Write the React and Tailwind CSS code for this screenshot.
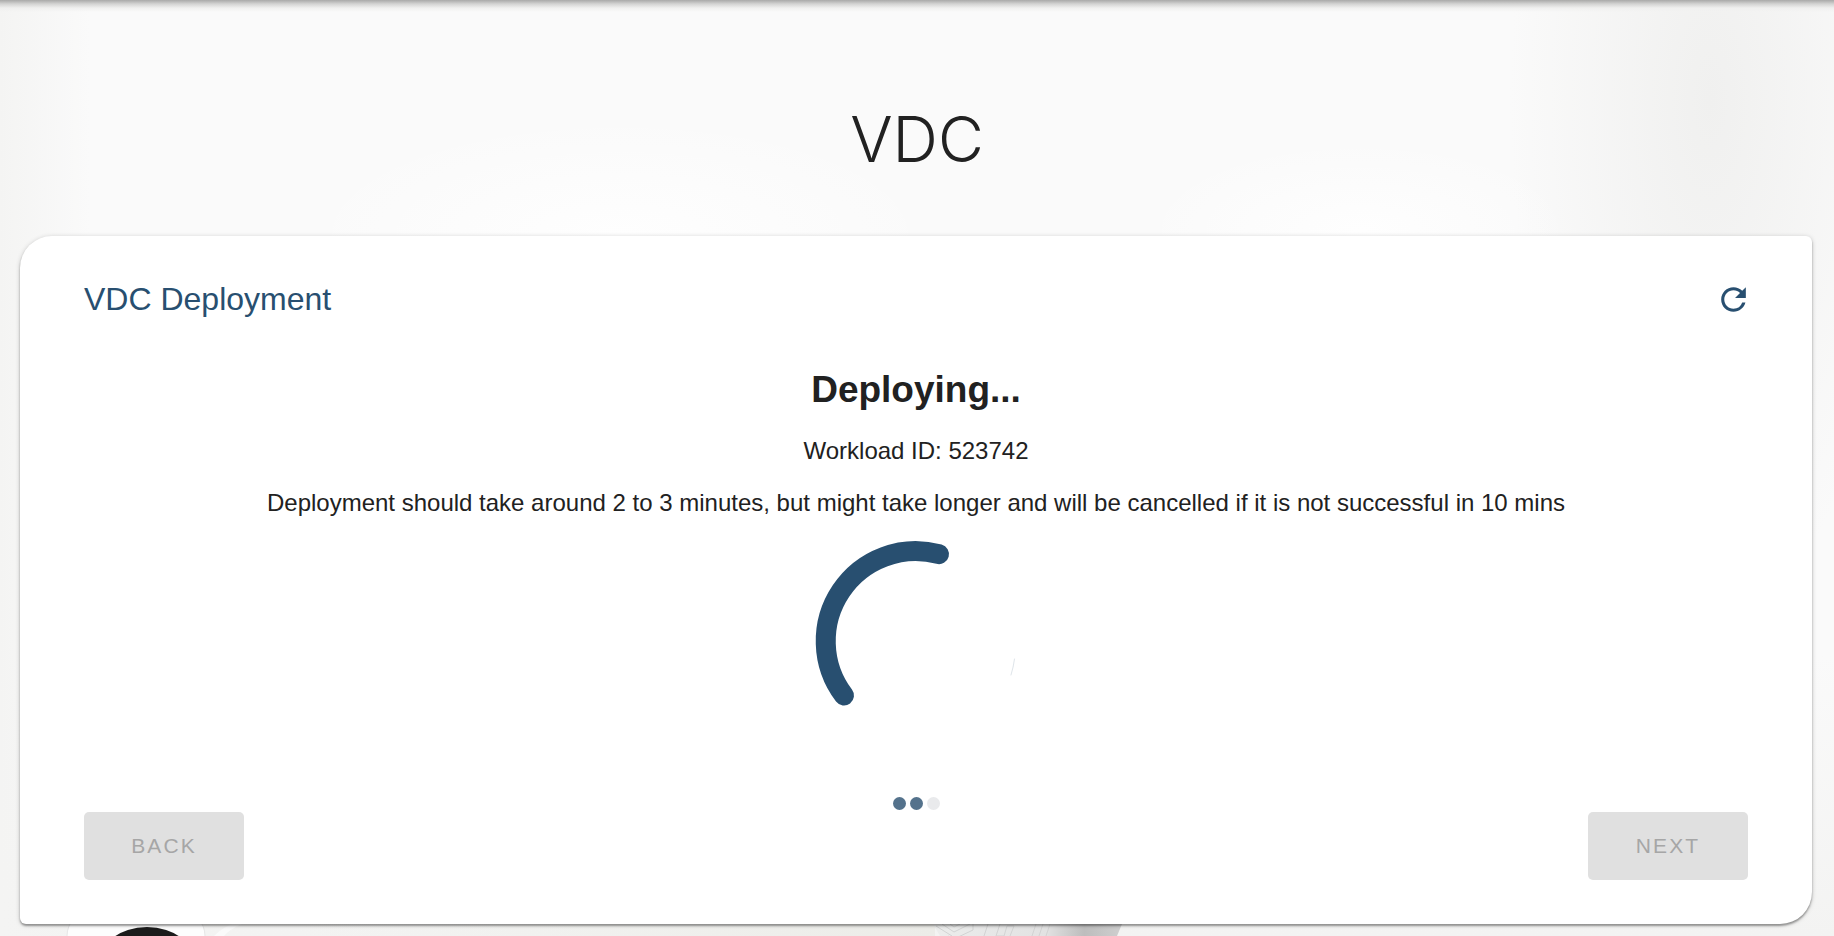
import { MdRefresh } from "react-icons/md";

function Backdrop() {
  return (
    <div
      aria-hidden="true"
      className="absolute inset-0 bg-[#fafafa] bg-[radial-gradient(ellipse_200px_520px_at_1710px_100px,#f0f0ef,transparent),radial-gradient(ellipse_320px_120px_at_620px_236px,#fefefe,transparent),radial-gradient(ellipse_220px_90px_at_1360px_230px,#fefefe,transparent),linear-gradient(to_right,#f4f4f3,transparent_90px),linear-gradient(to_bottom,transparent_70%,#f3f3f2)]"
    />
  );
}

function Spinner() {
  return (
    <svg
      role="img"
      aria-label="Deployment in progress"
      viewBox="-110 -110 220 220"
      className="size-[220px]"
      fill="none"
      strokeLinecap="round"
    >
      <path d="M-72 54.5 A90 90 0 0 1 23 -86.8" stroke="#284f70" strokeWidth="20" />
      <path d="M98.500 18 Q97.500 26 95 34" stroke="#dfe5ea" strokeWidth="1" />
    </svg>
  );
}

function Dots() {
  return (
    <div aria-hidden="true" className="flex justify-center gap-1">
      <span className="size-[13px] rounded-full bg-[#54728c]" />
      <span className="size-[13px] rounded-full bg-[#54728c]" />
      <span className="size-[13px] rounded-full bg-[#e9eaec]" />
    </div>
  );
}

function StepButton({ children }) {
  return (
    <button
      type="button"
      disabled
      className="h-[68px] w-40 rounded-[5px] bg-[#e0e0e0] text-[21px] tracking-widest text-[#a6a6a6] uppercase"
    >
      {children}
    </button>
  );
}

function FooterArt() {
  return (
    <div aria-hidden="true" className="h-3 overflow-hidden">
      <svg width="1834" height="12" viewBox="0 924 1834 12">
        <defs>
          <linearGradient id="slab" x1="0" x2="1">
            <stop offset="0" stopColor="#ecedec" />
            <stop offset="0.6" stopColor="#e2e2e2" />
            <stop offset="0.8" stopColor="#bdbdbd" />
            <stop offset="1" stopColor="#cfcfcf" />
          </linearGradient>
          <linearGradient id="floor" x1="0" x2="1">
            <stop offset="0" stopColor="#eeefeb" stopOpacity="0" />
            <stop offset="1" stopColor="#ecece8" />
          </linearGradient>
        </defs>
        <rect x="67" y="910" width="138" height="60" rx="26" fill="#fdfdfd" stroke="#e6e6e6" />
        <ellipse cx="147" cy="967" rx="50" ry="40" fill="#1b1b1b" />
        <path d="M214 936Q222 928 232 924H242Q230 929 224 936Z" fill="#fafafa" />
        <path d="M300 924H935V936H300Z" fill="url(#floor)" />
        <path d="M933 924H1122L1117 936H940Z" fill="url(#slab)" />
        <path
          d="M936 926L952 936M942 924L954 932L970 924M950 924L954 927L960 924M948 936L954 939L973 930V924M988 924L984 936M1000 924L996 936H1004L1007 926H1014L1010 936M1036 924L1032 936M1043 924L1039 936M1050 924L1046 936"
          fill="none"
          stroke="#d2d3d3"
        />
      </svg>
    </div>
  );
}

function DeploymentCard() {
  return (
    <main className="relative z-10 mr-[22px] ml-5 rounded-[6px] rounded-tl-[32px] rounded-br-[32px] bg-white px-16 pt-[39px] pb-11 shadow-[0_2px_2px_rgba(0,0,0,0.32),0_1px_5px_rgba(0,0,0,0.2)]">
      <header className="flex items-center justify-between">
        <h2 className="text-[32px] leading-[48px] text-[#284f70]">VDC Deployment</h2>
        <button type="button" aria-label="Refresh" className="-mr-1 text-[#284f70]">
          <MdRefresh className="size-[37px]" />
        </button>
      </header>
      <section className="flex flex-col items-center text-center text-2xl leading-8">
        <h3 className="mt-[43px] text-[37px] leading-[48px] font-bold">Deploying...</h3>
        <p className="mt-[21px]">Workload ID: 523742</p>
        <p className="mt-5">
          Deployment should take around 2 to 3 minutes, but might take longer and will be cancelled
          if it is not successful in 10 mins
        </p>
        <div className="mt-3">
          <Spinner />
        </div>
        <div className="mt-[46px]">
          <Dots />
        </div>
      </section>
      <footer className="mt-0.5 flex justify-between">
        <StepButton>Back</StepButton>
        <StepButton>Next</StepButton>
      </footer>
    </main>
  );
}

export default function App() {
  return (
    <div className="relative min-h-screen overflow-hidden font-['Liberation_Sans',Arial,sans-serif] text-[#212121]">
      <Backdrop />
      <div
        aria-hidden="true"
        className="absolute inset-x-0 top-0 h-3 bg-[linear-gradient(to_bottom,#a9a9a8,#d4d4d3_4px,#f0f0ef_8px,transparent)]"
      />
      <div className="relative">
        <h1 className="pt-[99px] pb-[57px] text-center font-['Inter',sans-serif] text-[63px] leading-[80px] font-light">
          VDC
        </h1>
        <DeploymentCard />
        <FooterArt />
      </div>
    </div>
  );
}
